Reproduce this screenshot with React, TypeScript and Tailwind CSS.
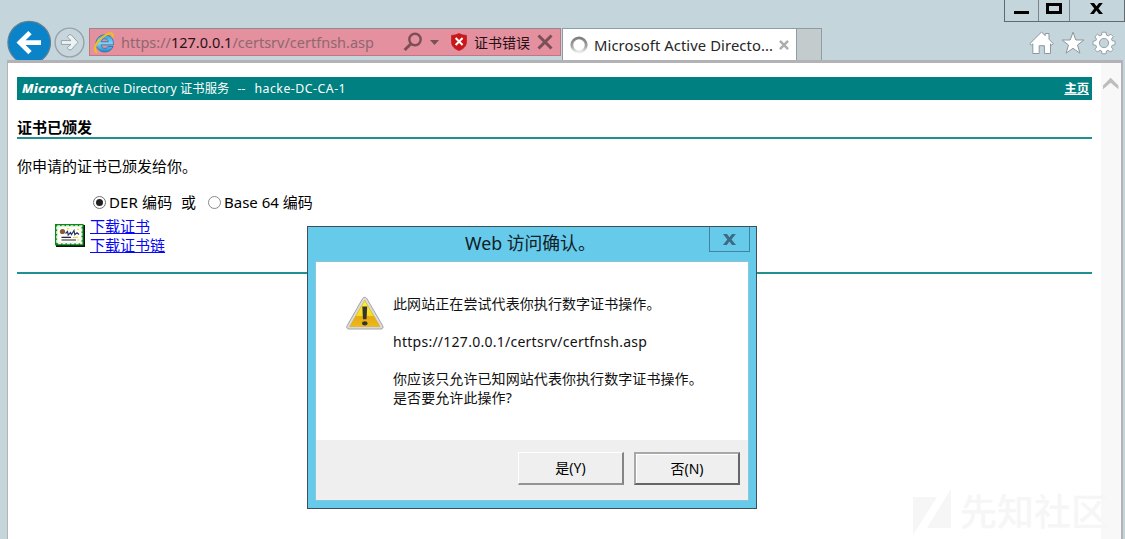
import React from "react";

const BackIcon = () => (
  <svg className="shrink-0" width="44" height="40" viewBox="0 0 44 40">
    <circle cx="22.2" cy="22.6" r="21.3" fill="#0a83c8" stroke="#5f7f93" strokeWidth="1.2" />
    <path d="M12.5 22.6H34M23 12.6L12.9 22.6L23 32.6" fill="none" stroke="#fff" strokeWidth="4.8" />
  </svg>
);

const ForwardIcon = () => (
  <svg className="shrink-0" width="31" height="31" viewBox="0 0 31 31">
    <circle cx="15.5" cy="15.5" r="14.4" fill="#c6d6dc" stroke="#98a2a8" strokeWidth="1.4" />
    <path d="M7.3 13.6H17L13.2 9.8L15 7.8H17.2L24 15.3L17.2 22.8H15L13.2 20.8L17 17.4H7.3Z" fill="#edf3f5" stroke="#98a2a8" strokeWidth="1" />
  </svg>
);

const IeIcon = () => (
  <svg className="shrink-0" width="22" height="23" viewBox="0 0 22 23">
    <defs>
      <linearGradient id="ie" x1="0" y1="0" x2="0" y2="1">
        <stop offset="0" stopColor="#2f9fdc" />
        <stop offset=".5" stopColor="#7fd2f5" />
        <stop offset="1" stopColor="#2289cc" />
      </linearGradient>
    </defs>
    <path d="M11.8 3.8C6.8 3.8 3 7.6 3 12.4S6.8 21 11.8 21C15.7 21 18.9 18.9 20.1 15.5H15C14.3 16.7 13.2 17.4 11.8 17.4C9.8 17.4 8.3 16 8.2 13.9H20.4C21 7.8 17.4 3.8 11.8 3.8ZM8.3 10.7C8.6 8.9 9.9 7.7 11.8 7.7S15 8.9 15.2 10.7Z" fill="url(#ie)" stroke="#1d74ae" strokeWidth=".8" />
    <path d="M4.2 21.6C.6 20 1.4 14.7 5.7 9.8C10 4.8 17.3.6 19.4 3.2C20 4 19.9 5.2 19.3 6.4" fill="none" stroke="#f3bd1d" strokeWidth="2.1" />
  </svg>
);

const SearchIcon = () => (
  <svg className="shrink-0" width="20" height="20" viewBox="0 0 20 20">
    <circle cx="12" cy="7.5" r="5.7" fill="none" stroke="#7b4f57" strokeWidth="2.4" />
    <path d="M8 11.7L1.6 18" stroke="#7b4f57" strokeWidth="3" />
  </svg>
);

const ShieldIcon = () => (
  <svg className="shrink-0" width="16" height="18" viewBox="0 0 16 18">
    <path d="M8 .5Q11 2.3 15.5 2.4V8.8C15.5 13 12.5 16 8 17.5C3.5 16 .5 13 .5 8.8V2.4Q5 2.3 8 .5Z" fill="#cc1719" stroke="#b32025" strokeWidth=".7" />
    <path d="M4.6 5L11.6 12M11.6 5L4.6 12" stroke="#fff" strokeWidth="2" />
  </svg>
);

const Cross = ({ size, width, color }: { size: number; width: number; color: string }) => (
  <svg className="shrink-0" width={size} height={size} viewBox="0 0 16 16">
    <path d="M1.5 1.5L14.5 14.5M14.5 1.5L1.5 14.5" stroke={color} strokeWidth={width} />
  </svg>
);

const Spinner = () => (
  <svg className="shrink-0" width="18" height="18" viewBox="0 0 18 18">
    <defs>
      <linearGradient id="spin" x1="0" y1="0" x2="0" y2="1">
        <stop offset="0" stopColor="#7d7d7d" />
        <stop offset=".6" stopColor="#a5a5a5" />
        <stop offset="1" stopColor="#efefef" />
      </linearGradient>
    </defs>
    <circle cx="9" cy="9" r="7.2" fill="none" stroke="url(#spin)" strokeWidth="2.8" />
  </svg>
);

const HomeIcon = () => (
  <svg width="25" height="24" viewBox="0 0 25 24">
    <path d="M12.5 1L16.2 4.7V2.5H20V8.2L24.3 12.7L22.7 14L21.5 12.9V22.5H15.4V14.7H10.2V22.5H3.8V12.9L2.4 14L.8 12.7Z" fill="#fff" stroke="#8b979d" strokeWidth="1" />
  </svg>
);

const StarIcon = () => (
  <svg width="24" height="24" viewBox="0 0 24 24">
    <path d="M12 1.2L14.8 9H23L16.5 14L18.9 22.2L12 17.3L5.1 22.2L7.5 14L1 9H9.2Z" fill="#fff" stroke="#8b979d" strokeWidth="1" />
  </svg>
);

const GearIcon = () => (
  <svg width="24" height="24" viewBox="0 0 24 24">
    <path
      d="M10 1.2H14L14.5 4.1L16.3 4.9L18.8 3.2L21.2 5.6L19.5 8.1L20.2 9.8L23 10.2V13.8L20.2 14.3L19.4 16L21.1 18.5L18.6 21L16.1 19.3L14.5 20L14 22.8H10L9.5 20L7.9 19.3L5.4 21L2.9 18.5L4.6 16L3.8 14.3L1 13.8V10.2L3.8 9.7L4.5 8.1L2.9 5.6L5.4 3.2L7.8 4.9L9.5 4.1ZM12 7.4A4.6 4.6 0 1 0 12 16.6A4.6 4.6 0 1 0 12 7.4Z"
      fill="#fff"
      fillRule="evenodd"
      stroke="#8b979d"
      strokeWidth=".9"
    />
  </svg>
);

const CertificateIcon = () => (
  <svg className="shrink-0" width="30" height="23" viewBox="0 0 30 23">
    <path d="M1 1H30V23H1Z" fill="#111" />
    <path d="M0 0H28.6V21.4H0Z" fill="#0b8a1c" />
    <path d="M2.2 2.2H26.4V19.3H2.2Z" fill="#fffef4" stroke="#e9f3e4" strokeWidth="2" strokeDasharray="3 1.4" />
    <circle cx="7.5" cy="7.5" r="2.6" fill="#8a5a3c" />
    <path d="M10.5 9.5L12.5 7.5L13.2 11L15.5 8.5L16.5 10.5L19 6.5L19.8 10.7L22 8.8L24 10.5" fill="none" stroke="#25356f" strokeWidth="1.2" />
    <path d="M6.5 13.3H16M6.5 16H21" stroke="#20264c" strokeWidth="1.2" />
    <path d="M18 13.4H23M22 5.3H24M12 4.6H14M22.5 16H24" stroke="#eadb62" strokeWidth="1.3" />
  </svg>
);

const WarningIcon = () => (
  <svg className="shrink-0" width="38" height="34" viewBox="0 0 38 34">
    <defs>
      <linearGradient id="warn" x1="0" y1="0" x2="0" y2="1">
        <stop offset="0" stopColor="#fbf04a" />
        <stop offset=".58" stopColor="#f7dc1c" />
        <stop offset=".62" stopColor="#e5ab10" />
        <stop offset="1" stopColor="#edb91c" />
      </linearGradient>
    </defs>
    <path d="M18.7 1.3C19.8 1.3 20.5 2 21 2.9L36.7 29.8C37.6 31.4 36.8 33 35 33H2.8C1 33 .2 31.4 1.1 29.8L16.4 2.9C16.9 2 17.6 1.3 18.7 1.3Z" fill="#dcdcdc" stroke="#a2a2a2" strokeWidth="1" />
    <path d="M18.7 4.3L34 30.6H3.7Z" fill="url(#warn)" stroke="#d3ad2b" strokeWidth=".7" />
    <path d="M16.3 10.5H21.2L20.5 23.3H17Z" fill="#33352e" />
    <ellipse cx="18.8" cy="27.3" rx="2.7" ry="2.1" fill="#33352e" />
  </svg>
);

const ScrollUp = () => (
  <svg width="16" height="14" viewBox="0 0 16 14">
    <path d="M0 8.5L7.7 .8L15.4 8.5V12.3L7.7 5.8L0 12.3Z" fill="#bdbdbd" />
  </svg>
);

function Chrome() {
  return (
    <header className="relative flex h-[60px] shrink-0 items-start bg-[#c4d6dc] pl-[7px] pt-5">
      <BackIcon />
      <div className="ml-[3px] mt-[7px]">
        <ForwardIcon />
      </div>
      <div className="ml-1 mt-2 flex h-7 w-[472px] shrink-0 items-center border border-[#c27684] border-t-[#93898f] bg-[#e4909f] pl-[3px] whitespace-pre">
        <IeIcon />
        <div className="ml-[6px] w-[282px] text-[14.5px] leading-7 text-[#8e6870]">
          https://<span className="text-[#2b1216]">127.0.0.1</span>/certsrv/certfnsh.asp
        </div>
        <SearchIcon />
        <svg className="ml-[7px] shrink-0" width="9" height="5" viewBox="0 0 9 5">
          <path d="M0 0H9L4.5 5Z" fill="#7b4f57" />
        </svg>
        <div className="ml-3">
          <ShieldIcon />
        </div>
        <span className="ml-[7px] mr-[7px] pt-0.5 text-sm leading-7 text-[#241115]">证书错误</span>
        <Cross size={16} width={3} color="#7b4f57" />
      </div>
      <div className="ml-[1px] mt-2 flex h-8 w-[235px] shrink-0 items-center border border-b-0 border-[#8c9da3] bg-white pl-[7px] whitespace-pre">
        <Spinner />
        <span className="ml-[6px] w-[185px] text-[14.8px] leading-8 tracking-[0.08px] text-[#262626]">Microsoft Active Directo...</span>
        <Cross size={10} width={4} color="#adadad" />
      </div>
      <div className="mt-2 h-8 w-[25px] shrink-0 border border-b-0 border-l-0 border-[#8c9da3] bg-[#c4cbcc]" />
      <div className="ml-auto mr-[9px] mt-[11px] flex shrink-0 gap-[7px]">
        <HomeIcon />
        <StarIcon />
        <GearIcon />
      </div>
      <div className="absolute right-0 top-0 flex h-[22px] w-[121px] border border-t-0 border-[#5f6b70]">
        <div className="flex w-[34px] items-start justify-center border-r border-[#7a8589] pt-[11px]">
          <div className="h-[3px] w-[15px] bg-black" />
        </div>
        <div className="flex w-[31px] items-start justify-center border-r border-[#7a8589] pt-[3px]">
          <div className="h-[11px] w-4 border-[3px] border-black" />
        </div>
        <div className="flex flex-1 items-start justify-center pr-[2px] pt-[3px]">
          <svg width="13" height="11" viewBox="0 0 13 11">
            <path d="M0 0H4L6.5 3.3L9 0H12.8L8.5 5.4L13 11H9L6.4 7.4L3.8 11H0L4.3 5.4Z" fill="#000" />
          </svg>
        </div>
      </div>
    </header>
  );
}

function Page() {
  return (
    <main className="flex w-[1093px] shrink-0 flex-col pl-[9px] pr-[9px] pt-[14px] text-[15px] text-black whitespace-pre">
      <div className="flex h-[23px] shrink-0 items-center justify-between bg-[#008080] pl-[5px] pr-[3px] text-[12.3px] leading-[23px] text-white">
        <div className="flex">
          <span className="w-[63px] text-[13px] font-extrabold italic tracking-[0.12px]">Microsoft</span>
          <span className="tracking-[0.06px]">Active Directory 证书服务</span>
          <span className="ml-2 w-[17px]">--</span>
          <span className="tracking-[0.5px]">hacke-DC-CA-1</span>
        </div>
        <a className="font-bold underline">主页</a>
      </div>
      <h1 className="mt-[17px] h-[22px] shrink-0 border-b-2 border-[#209090] text-[15px] leading-5 font-bold">证书已颁发</h1>
      <p className="mt-[17px] h-5 shrink-0 leading-5">你申请的证书已颁发给你。</p>
      <div className="mt-4 flex h-5 shrink-0 items-center pl-[76px] leading-5">
        <span className="flex size-[13px] items-center justify-center rounded-full border border-[#707070]">
          <span className="size-[7px] rounded-full bg-[#222]" />
        </span>
        <span className="ml-[3px] w-[72px] tracking-[0.15px]">DER 编码</span>
        <span>或</span>
        <span className="ml-3 size-[13px] rounded-full border border-[#8a8a8a]" />
        <span className="ml-[3px]">Base 64 编码</span>
      </div>
      <div className="mt-[5px] flex h-[38px] shrink-0 pl-[38px]">
        <div className="mt-[7px]">
          <CertificateIcon />
        </div>
        <div className="ml-[5px] flex flex-col text-[#0808f4] leading-[19px]">
          <a className="underline">下载证书</a>
          <a className="underline">下载证书链</a>
        </div>
      </div>
      <div className="mt-[17px] h-0.5 shrink-0 bg-[#209090]" />
    </main>
  );
}

function Dialog() {
  return (
    <section className="absolute left-[307px] top-[226px] flex h-[283px] w-[450px] flex-col border border-[#3f4f57] bg-[#66caea] px-2 pb-2 whitespace-pre">
      <div className="flex h-[35px] shrink-0 items-start">
        <h2 className="ml-[149px] h-[35px] w-[244px] shrink-0 text-[17.8px] leading-[33px] text-[#102026]">Web 访问确认。</h2>
        <div className="-mr-[2px] flex h-[25px] w-[41px] shrink-0 items-center justify-center border border-t-0 border-[#45819a]">
          <svg width="13" height="11" viewBox="0 0 13 11">
            <path d="M0 0H4L6.5 3.3L9 0H12.8L8.5 5.4L13 11H9L6.4 7.4L3.8 11H0L4.3 5.4Z" fill="#3d6b84" />
          </svg>
        </div>
      </div>
      <div className="flex flex-1 flex-col outline outline-[#8fc4d8]">
        <div className="flex flex-1 bg-white pl-[30px] pt-[34px]">
          <WarningIcon />
          <div className="-mt-px ml-[9px] text-sm leading-[18.8px] text-[#111]">
            <p className="tracking-[0.08px]">此网站正在尝试代表你执行数字证书操作。</p>
            <p className="mt-[18.8px] tracking-[0.26px]">https://127.0.0.1/certsrv/certfnsh.asp</p>
            <p className="mt-[18.8px] tracking-[0.08px]">你应该只允许已知网站代表你执行数字证书操作。</p>
            <p className="tracking-[0.08px]">是否要允许此操作?</p>
          </div>
        </div>
        <div className="flex h-[60px] shrink-0 justify-end gap-[10px] bg-[#efefef] pr-2 pt-3 text-sm text-black">
          <button className="h-[33px] w-[106px] border border-r-2 border-b-2 border-white border-r-[#858585] border-b-[#939393]">是(Y)</button>
          <button className="h-[33px] w-[106px] border-2 border-[#a8a8a8] border-r-[#666] border-b-[#666] shadow-[inset_1px_1px_0_#fff]">否(N)</button>
        </div>
      </div>
    </section>
  );
}

export default function App() {
  return (
    <div className="relative flex h-[539px] w-[1125px] flex-col overflow-hidden bg-[#c4d6dc] [font-family:'Noto_Sans','Noto_Sans_CJK_SC',sans-serif]">
      <Chrome />
      <div className="ml-[7px] mr-[2px] flex min-h-0 flex-1 border-t-[3px] border-r-2 border-l border-[#b3b3b7] bg-white">
        <Page />
        <div className="flex flex-1 justify-center bg-[#f8f8f8] pt-[14px]">
          <ScrollUp />
        </div>
      </div>
      <div className="absolute left-[913px] top-[488px] flex items-center gap-[9px] whitespace-pre text-[#f6f6f6]">
        <svg width="38" height="48" viewBox="0 0 38 48">
          <path d="M0 9H24L0 47ZM38 1V40H14Z" fill="currentColor" />
        </svg>
        <span className="text-[37px] leading-[48px] font-medium">先知社区</span>
      </div>
      <Dialog />
    </div>
  );
}
